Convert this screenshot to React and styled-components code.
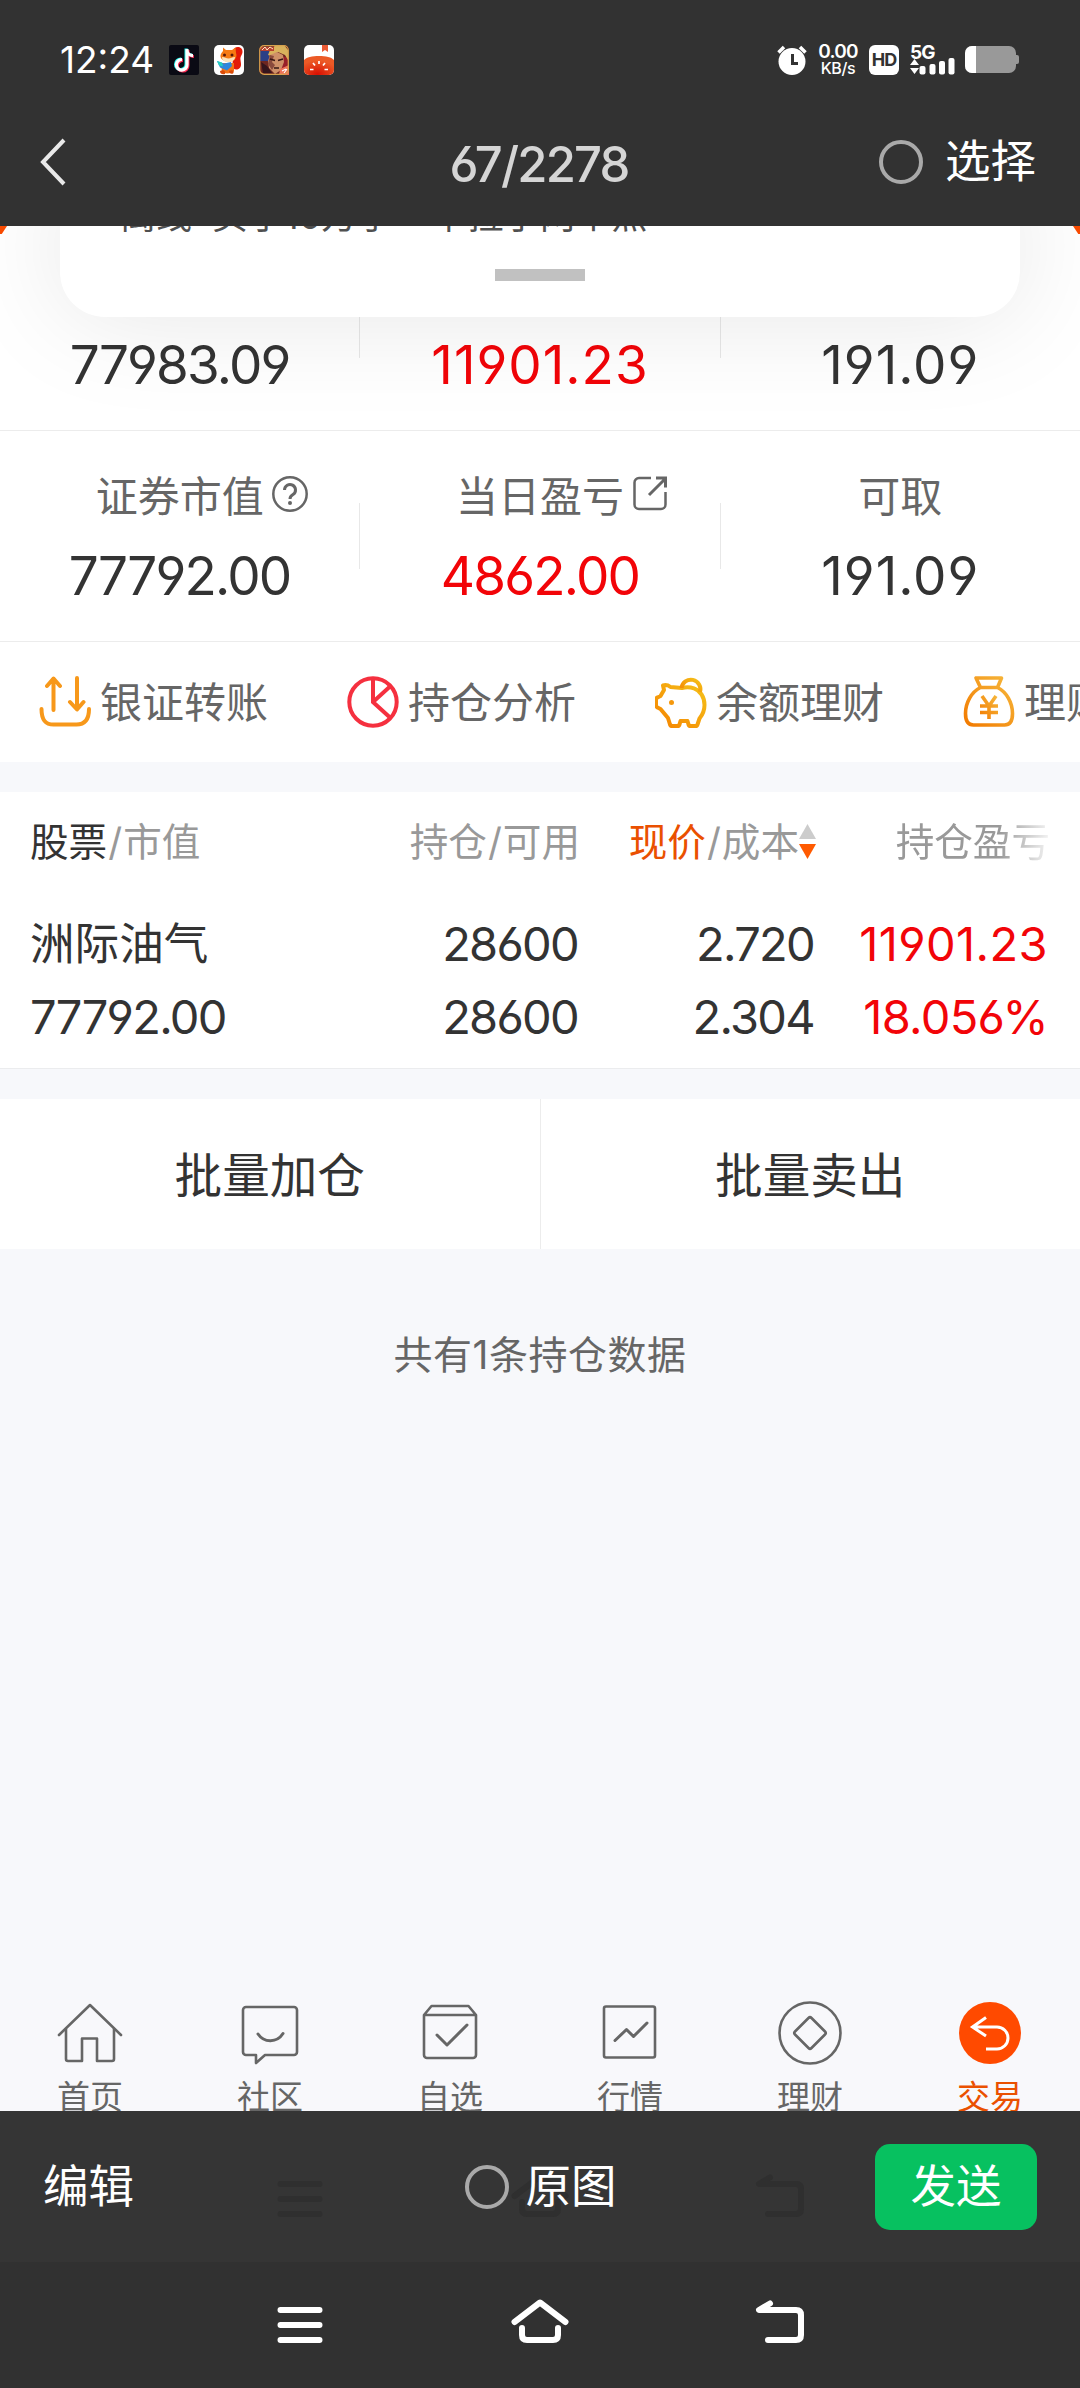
import styled, { createGlobalStyle } from "styled-components";

const summary = [
  [
    { value: "77983.09" },
    { value: "11901.23", up: true, tracking: 1 },
    { value: "191.09", tracking: 1 },
  ],
  [
    { label: "证券市值", value: "77792.00", icon: "help" },
    { label: "当日盈亏", value: "4862.00", up: true, icon: "open" },
    { label: "可取", value: "191.09", tracking: 1 },
  ],
];

const shortcuts = [
  { name: "银证转账", Icon: TransferIcon },
  { name: "持仓分析", Icon: PieIcon },
  { name: "余额理财", Icon: PiggyIcon },
  { name: "理财", Icon: MoneyBagIcon },
];

const tabs = [
  { name: "首页", Icon: HomeTabIcon },
  { name: "社区", Icon: ChatTabIcon },
  { name: "自选", Icon: BoxTabIcon },
  { name: "行情", Icon: TrendTabIcon },
  { name: "理财", Icon: CoinTabIcon },
  { name: "交易", Icon: TradeTabIcon, active: true },
];

export default function App() {
  return (
    <>
      <GlobalStyle />
      <Screen>
        <StatusBar />

        <ViewerHeader>
          <svg width="28" height="50" viewBox="0 0 28 50">
            <path
              d="M25 3 L4 25 L25 47"
              fill="none"
              stroke="#e9e9e9"
              strokeWidth="4"
            />
          </svg>
          <Counter>67/2278</Counter>
          <Choice>
            <Radio />
            选择
          </Choice>
        </ViewerHeader>

        <Photo>
          <Corner />
          <Corner $right />
          <Notice>
            <p>
              离线<NoticeGap />买了10万手<NoticeGap $small />一下拉了两个点
            </p>
            <Handle />
          </Notice>

          <Summary>
            {summary.map((cells, index) => (
              <SummaryRow key={index}>
                {cells.map((cell, cellIndex) => (
                  <SummaryCell key={cellIndex}>
                    <SummaryLabel>
                      {cell.label}
                      {cell.icon === "help" && <HelpIcon />}
                      {cell.icon === "open" && <OpenIcon />}
                    </SummaryLabel>
                    <SummaryValue $up={cell.up} $tracking={cell.tracking}>
                      {cell.value}
                    </SummaryValue>
                  </SummaryCell>
                ))}
              </SummaryRow>
            ))}
          </Summary>

          <Shortcuts>
            {shortcuts.map(({ name, Icon }) => (
              <Shortcut key={name}>
                <Icon />
                {name}
              </Shortcut>
            ))}
          </Shortcuts>

          <Holdings>
            <HoldingsHead>
              <HeadCell>
                <Dark>股票</Dark>
                <Slash>/</Slash>市值
              </HeadCell>
              <HeadCell $end>
                持仓<Slash>/</Slash>可用
              </HeadCell>
              <HeadCell $end>
                <Accent>现价</Accent>
                <Slash>/</Slash>成本
                <SortIcon />
              </HeadCell>
              <HeadCell $end $fade>
                持仓盈亏
              </HeadCell>
            </HoldingsHead>
            <HoldingsRow>
              <Name>洲际油气</Name>
              <Num>28600</Num>
              <Num>2.720</Num>
              <Num $up $tracking={0.4}>
                11901.23
              </Num>
              <Num $start>77792.00</Num>
              <Num>28600</Num>
              <Num>2.304</Num>
              <Num $up $tracking={-0.7}>
                18.056%
              </Num>
            </HoldingsRow>
          </Holdings>

          <Batch>
            <BatchButton>批量加仓</BatchButton>
            <BatchButton>批量卖出</BatchButton>
          </Batch>

          <Total>共有1条持仓数据</Total>

          <TabBar>
            {tabs.map(({ name, Icon, active }) => (
              <Tab key={name} $active={active}>
                <Icon />
                <span>{name}</span>
              </Tab>
            ))}
          </TabBar>
        </Photo>

        <Toolbar>
          <Ghost>
            <NavIcons color="#2f2f2f" />
          </Ghost>
          <Edit>编辑</Edit>
          <Original>
            <Radio />
            原图
          </Original>
          <Send>发送</Send>
        </Toolbar>

        <NavBar>
          <NavIcons color="#fff" />
        </NavBar>
      </Screen>
    </>
  );
}

// *** [ status bar ] ********************************************************

function StatusBar() {
  return (
    <Status>
      <Clock>12:24</Clock>
      <AppIcons>
        <svg viewBox="0 0 30 30">
          <rect width="30" height="30" rx="2" fill="#0a0a14" />
          <g fill="none" strokeWidth="3.2">
            <path
              d="M18 4v15.5a5.3 5.3 0 1 1-5-5M18 5c0 3 2.5 5.6 6 5.6"
              stroke="#25f4ee"
              transform="translate(-.9 -.5)"
            />
            <path
              d="M18 4v15.5a5.3 5.3 0 1 1-5-5M18 5c0 3 2.5 5.6 6 5.6"
              stroke="#fe2c55"
              transform="translate(.9 .9)"
            />
            <path
              d="M18 4v15.5a5.3 5.3 0 1 1-5-5M18 5c0 3 2.5 5.6 6 5.6"
              stroke="#fff"
            />
          </g>
        </svg>

        <svg viewBox="0 0 30 30">
          <rect width="30" height="30" rx="5" fill="#fff" />
          <path
            d="M19 6c1-6 10-5 9.500 1-.2 3-2.500 4-2 8s1.500 7-2 9c-3 1.500-6 0-6-3z"
            fill="#e31a08"
          />
          <path
            d="M9 2.500l3 2.500h6l3.500-2.500L22 8c1.500 4-1 8-6 8.500-5 .5-10-2-9.500-6C6.800 8 8.500 7 9 6z"
            fill="#f77a12"
          />
          <path d="M8 12c3 0 4 1.500 6.500 1.500S18 12 21 12c0 3.500-3 5-6.500 5S8 16 8 12z" fill="#fbe3bd" />
          <circle cx="10.500" cy="10" r="1.500" fill="#5a1a08" />
          <circle cx="18" cy="10" r="1.500" fill="#5a1a08" />
          <path d="M7 18h13v8c-2 3-10 3-12 1z" fill="#f47314" />
          <path d="M3 16l7 2.500 7-1.500 1 4-5 4.500-7-3z" fill="#2f86dc" />
          <path d="M3 16l5 1.500 1 4-4-1z" fill="#25cfc0" />
          <path d="M6 26c3-2 6 0 5 3-3 .6-5-.4-5-3zm9 0c3-2 6 0 4 2.500-2 .6-4 0-4-2.500z" fill="#d94a08" />
        </svg>

        <svg viewBox="0 0 30 30">
          <rect width="30" height="30" rx="5" fill="#6e2620" />
          <path d="M1 6h9v10H1z" fill="#2b3f86" />
          <path d="M23 12h7v13h-8z" fill="#98202a" />
          <path d="M11 5l6-5h8l4 5v10l-3-5-7-3-7 4-3-1z" fill="#d9b25c" />
          <path d="M11 10l7-3 6 3 1 7-3 8-6 4-6-6-1-7z" fill="#cf9068" />
          <path d="M11 10l4 1-2 6 3 3-3 5-4-6z" fill="#8a4a3c" />
          <path d="M11 14l5 1.500M19 15.500l5-1.500M15 23h5" stroke="#3a1714" strokeWidth="1.500" />
          <path d="M2 17l6 4 5 7H4z" fill="#35151c" />
          <path d="M21 24l9-4v10H20z" fill="#ee7258" />
          <path d="M23 26l4-2m-2 4l3-4" stroke="#fff" strokeWidth="1.200" />
          <path d="M2 2h13v4H2z" fill="#b8402e" />
          <path d="M3 5l3-3 2 3 3-3 3 2" stroke="#ffe6c0" fill="none" />
          <rect x=".7" y=".7" width="28.600" height="28.600" rx="4.500" fill="none" stroke="#d6a24e" strokeWidth="1.200" />
        </svg>

        <svg viewBox="0 0 30 30">
          <defs>
            <radialGradient id="tomato" cx=".45" cy=".95" r=".7">
              <stop offset="0" stopColor="#d80f02" />
              <stop offset="1" stopColor="#ec5a26" />
            </radialGradient>
            <clipPath id="tomatoClip">
              <rect width="30" height="30" rx="5" />
            </clipPath>
          </defs>
          <g clipPath="url(#tomatoClip)">
            <rect width="30" height="30" fill="#fff" />
            <path d="M18 0h6v7l-3-2-3 2z" fill="#ea5a34" />
            <path d="M0 15c4-5.500 26-5.500 30 0v15H0z" fill="url(#tomato)" />
            <path
              d="M15 16v3M9 18l2 2.500M21 18l-2 2.500M6 24.500h3.500M24 24.500h-3.500"
              stroke="#fff"
              strokeWidth="1.700"
            />
          </g>
        </svg>
      </AppIcons>

      <svg width="30" height="30" viewBox="0 0 30 30">
        <circle cx="15" cy="16.500" r="13.500" fill="#fff" />
        <path d="M1.500 7.500L7 2M28.500 7.500L23 2" stroke="#fff" strokeWidth="3.500" />
        <path d="M15.500 9v9.500h5.500" fill="none" stroke="#333" strokeWidth="3" />
      </svg>
      <Speed>
        <b>0.00</b>
        <span>KB/s</span>
      </Speed>
      <HdBadge>HD</HdBadge>
      <Signal>
        <b>5G</b>
        <svg width="46" height="17" viewBox="0 0 46 17">
          <path d="M0 7L4.500 1 9 7zM0 10h9l-4.500 6z" fill="#fff" />
          <rect x="9.500" y="8" width="6" height="8.500" rx="2" fill="#fff" />
          <rect x="19.500" y="6" width="6" height="10.500" rx="2" fill="#fff" />
          <rect x="29" y="3" width="6" height="13.500" rx="2" fill="#fff" />
          <rect x="38.500" y="0" width="6" height="16.500" rx="2" fill="#fff" />
        </svg>
      </Signal>
      <svg width="54" height="27" viewBox="0 0 54 27">
        <rect width="51" height="27" rx="7" fill="#999" />
        <rect x="49" y="9" width="5" height="9" rx="2" fill="#999" />
        <path d="M11 0H7a7 7 0 0 0-7 7v13a7 7 0 0 0 7 7h4z" fill="#fff" />
      </svg>
    </Status>
  );
}

// *** [ icons ] *************************************************************

function HelpIcon() {
  return (
    <svg width="36" height="36" viewBox="0 0 36 36" fill="none" stroke="#666">
      <circle cx="18" cy="18" r="16.700" strokeWidth="2.500" />
      <path
        d="M12.500 14a5.500 5.500 0 1 1 8.500 4.600c-2 1.300-3 2.200-3 4.400"
        strokeWidth="3"
      />
      <circle cx="18" cy="27" r="2" fill="#666" stroke="none" />
    </svg>
  );
}

function OpenIcon() {
  return (
    <svg width="36" height="36" viewBox="-1 0 36 36" fill="none" stroke="#666" strokeWidth="2.500">
      <path d="M18 2H6A4.500 4.500 0 0 0 1.500 6.500v22A4.500 4.500 0 0 0 6 33h22a4.500 4.500 0 0 0 4.500-4.500V16" />
      <path d="M16 19L32 3M23 2h9.500v9.500" strokeWidth="3" />
    </svg>
  );
}

function TransferIcon() {
  return (
    <svg viewBox="0 0 52 52" fill="none" stroke="#f7981a" strokeWidth="4" strokeLinecap="round" strokeLinejoin="round">
      <path d="M14.500 34V3M8 10l6.500-7.500L21 10M38 2v31M31 26l7 7.500 6.500-7.500" />
      <path d="M2.500 33c0 11 4 15.500 12 15.500h23c8 0 12.500-4.500 12.500-15.500" />
    </svg>
  );
}

function PieIcon() {
  return (
    <svg viewBox="0 0 52 52" fill="none" stroke="#f5303f" strokeWidth="4">
      <circle cx="26" cy="26" r="23.700" />
      <path d="M26 3v23l17 15.500M26 26l17-15.500" />
    </svg>
  );
}

function PiggyIcon() {
  return (
    <svg viewBox="0 0 52 52" fill="none" stroke="url(#piggy)" strokeWidth="4" strokeLinejoin="round">
      <defs>
        <linearGradient id="piggy" x1="0" y1="1" x2="1" y2="0">
          <stop offset="0" stopColor="#f58300" />
          <stop offset="1" stopColor="#f5c21a" />
        </linearGradient>
      </defs>
      <path d="M27 12c4-1 9-.6 12 .4 6.500 2.200 10.500 9 10.500 16.600 0 6-2.500 10.500-5 13.500l-2 6q-.5 1.500-2 1.500h-5q-1.500 0-2-1.500l-1-3.500h-7l-1 3.500q-.5 1.500-2 1.500h-5q-2 0-2.500-1.500l-2-6.500-7.500-9-3-1.500q-1.500-1-1.500-2v-6q0-1.500 1.500-2l3-1.500 3.500-6-1-4.500c3-1 5.500 0 7.500 1.500z" />
      <path d="M26.500 12a9.500 9.500 0 1 1 18.500 4" />
      <circle cx="16.500" cy="26.500" r="2.500" fill="#f5980c" stroke="none" />
    </svg>
  );
}

function MoneyBagIcon() {
  return (
    <svg viewBox="0 0 52 52" fill="none" stroke="url(#bag)" strokeWidth="3.600" strokeLinejoin="round">
      <defs>
        <linearGradient id="bag" x1="0" y1="1" x2="1" y2="0">
          <stop offset="0" stopColor="#f27a00" />
          <stop offset="1" stopColor="#f6b83c" />
        </linearGradient>
      </defs>
      <path d="M13 2h25.500l-4 9.500c9 4.500 15 15 15 26 0 8-2.500 11.500-8 11.500h-31c-5.500 0-8-3.500-8-11.500 0-11 6-21.500 15-26zM17.500 11.500h17" />
      <path d="M19 20l7 10 7-10M26 30v13M17 30h18M17 36.500h18" />
    </svg>
  );
}

function SortIcon() {
  return (
    <svg width="17" height="36" viewBox="0 0 17 36">
      <path d="M8.500 0L17 15H0z" fill="#ccc" />
      <path d="M0 20h17L8.500 35z" fill="#ff5a00" />
    </svg>
  );
}

function TabSvg({ children }) {
  return (
    <svg
      width="66"
      height="66"
      viewBox="0 0 66 66"
      fill="none"
      stroke="#666"
      strokeWidth="2.600"
      strokeLinecap="round"
      strokeLinejoin="round"
    >
      {children}
    </svg>
  );
}

function HomeTabIcon() {
  return (
    <TabSvg>
      <path d="M2 34L33 4l31 30" />
      <path d="M9 28v30a2 2 0 0 0 2 2h14V37.500h15V60h15a2 2 0 0 0 2-2V28" />
    </TabSvg>
  );
}

function ChatTabIcon() {
  return (
    <TabSvg>
      <path d="M9 6h48a3 3 0 0 1 3 3v42a3 3 0 0 1-3 3H28l-9 8v-8H9a3 3 0 0 1-3-3V9a3 3 0 0 1 3-3z" />
      <path d="M21 33c6 9 19 9 25-.5" strokeWidth="3" />
    </TabSvg>
  );
}

function BoxTabIcon() {
  return (
    <TabSvg>
      <path d="M7 14v40a3 3 0 0 0 3 3h46a3 3 0 0 0 3-3V14l-7.500-9h-37zM7 14h52" />
      <path d="M20 34l10 10 20-20" strokeWidth="3" />
    </TabSvg>
  );
}

function TrendTabIcon() {
  return (
    <TabSvg>
      <rect x="7" y="5.500" width="51" height="51" rx="2" />
      <path d="M18 39.500l11.500-11 7 7L50 22" strokeWidth="3" />
    </TabSvg>
  );
}

function CoinTabIcon() {
  return (
    <TabSvg>
      <circle cx="33" cy="32" r="30.500" />
      <path d="M31.500 17q1.500-1.500 3 0L48 30.500q1.500 1.500 0 3L34.500 47q-1.500 1.500-3 0L18 33.500q-1.500-1.500 0-3z" />
    </TabSvg>
  );
}

function TradeTabIcon() {
  return (
    <TabSvg>
      <circle cx="33" cy="32" r="31" fill="#ff4a00" stroke="none" />
      <path
        d="M29 16.500L15.500 26 29 35M16 26h24a10.500 10.500 0 0 1 0 22H29"
        stroke="#fff"
        strokeWidth="3"
        strokeLinecap="butt"
        strokeLinejoin="miter"
      />
    </TabSvg>
  );
}

function NavIcons({ color }) {
  const paths = [
    "M10.500 15h39M10.500 30h39M10.500 45h39",
    "M4.500 27L30 7.500L55.500 27M12 33v7q0 5 5 5h26q5 0 5-5v-7",
    "M20 8.500L9 15h37q5 0 5 5v20q0 5-5 5H18",
  ];

  return paths.map((path) => (
    <svg
      key={path}
      width="60"
      height="60"
      viewBox="0 0 60 60"
      fill="none"
      stroke={color}
      strokeWidth="6"
      strokeLinecap="round"
      strokeLinejoin="round"
    >
      <path d={path} />
    </svg>
  ));
}

// *** [ styles ] ************************************************************

const GlobalStyle = createGlobalStyle`
  * {
    box-sizing: border-box;
    margin: 0;
    padding: 0;
  }

  body {
    background: #313131;
    font-family: Inter, "Noto Sans CJK SC", sans-serif;
    /* open 6 and 9 */
    font-feature-settings: "cv03", "cv04";
  }

  svg {
    display: block;
    flex: none;
  }

  button {
    border: none;
    background: none;
    font: inherit;
    color: inherit;
  }
`;

const Screen = styled.div`
  width: 1080px;
  height: 2388px;
  display: flex;
  flex-direction: column;
  overflow: hidden;
`;

const Status = styled.div`
  height: 104px;
  padding: 15px 61px 0 60px;
  background: #323232;
  color: #fff;
  display: flex;
  align-items: center;
`;

const Clock = styled.span`
  width: 109px;
  font-size: 37px;
  line-height: 40px;
`;

const AppIcons = styled.div`
  display: flex;
  gap: 15px;
  margin-right: auto;

  svg {
    width: 30px;
    height: 30px;
  }
`;

const Speed = styled.div`
  width: 38px;
  margin: 0 12px;
  display: flex;
  flex-direction: column;
  align-items: center;
  line-height: 16px;
  white-space: nowrap;

  b {
    font-size: 19px;
    font-weight: 600;
    letter-spacing: -0.8px;
  }

  span {
    font-size: 16px;
    font-weight: 500;
    letter-spacing: -0.4px;
  }
`;

const HdBadge = styled.span`
  width: 30px;
  height: 30px;
  border-radius: 6px;
  background: #fff;
  color: #323232;
  font-size: 18px;
  font-weight: 700;
  letter-spacing: -1px;
  line-height: 30px;
  text-align: center;
`;

const Signal = styled.div`
  width: 46px;
  margin: 0 9px 0 11px;
  height: 30px;

  b {
    display: block;
    height: 13px;
    font-size: 19px;
    font-weight: 700;
    letter-spacing: -1px;
    line-height: 15px;
  }
`;

const ViewerHeader = styled.header`
  height: 122px;
  padding: 0 44px 6px 39px;
  background: #323232;
  display: grid;
  grid-template-columns: 1fr auto 1fr;
  align-items: center;
`;

const Counter = styled.h1`
  font-size: 49px;
  font-weight: 500;
  letter-spacing: -1.8px;
  line-height: 60px;
  padding: 6px 0 0 3px;
  color: #d5d5d5;
`;

const Choice = styled.button`
  justify-self: end;
  display: flex;
  align-items: center;
  gap: 22px;
  color: #fff;
  font-size: 45.5px;
  line-height: 56px;
`;

const Radio = styled.i`
  width: 44px;
  height: 44px;
  border: 4px solid #a9a9a9;
  border-radius: 50%;
`;

const Photo = styled.main`
  position: relative; // holds the notice that hangs over the page
  height: 1885px;
  background: #f7f8fb;
  overflow: hidden;
  display: flex;
  flex-direction: column;
`;

const Corner = styled.i`
  position: absolute;
  z-index: 1;
  top: 0;
  ${(props) => (props.$right ? "right: 0;" : "left: 0;")}
  width: 7px;
  height: 8px;
  background: #f84a00;
  clip-path: polygon(0 0, 100% 0, 25% 100%, 0 100%);
  transform: ${(props) => (props.$right ? "scaleX(-1)" : "none")};
`;

const Notice = styled.div`
  position: absolute;
  top: -40px;
  left: 60px;
  right: 60px;
  height: 131px;
  border-radius: 0 0 45px 45px;
  background: #fff;
  box-shadow: 0 0 110px rgba(0, 0, 0, 0.1);
  color: #505050;

  p {
    padding: 10px 0 0 60px;
    font-size: 36px;
    line-height: 40px;
    white-space: nowrap;
  }
`;

const NoticeGap = styled.span`
  display: inline-block;
  width: ${(props) => (props.$small ? "2px" : "20px")};
`;

const Handle = styled.i`
  display: block;
  width: 90px;
  height: 12px;
  margin: 33px auto 0;
  background: #c1c1c1;
`;

const Summary = styled.section`
  margin-top: -6px;
  flex: none;
  background: #fff;
`;

const SummaryRow = styled.div`
  height: 211px;
  border-bottom: 1px solid #ececec;
  display: flex;
  align-items: center;
`;

const SummaryCell = styled.div`
  flex: 1;
  height: 66px;
  display: flex;
  flex-direction: column;
  align-items: center;
  justify-content: center;
  gap: 17px;
  border-right: 1px solid #e8e8e8;

  &:last-child {
    border-right: none;
  }
`;

const SummaryLabel = styled.div`
  position: relative;
  flex: none;
  height: 60px;
  margin-top: 3px;
  font-size: 42px;
  line-height: 60px;
  color: #666;

  // label stays centred without its icon
  svg {
    position: absolute;
    top: 9px;
    left: calc(100% + 8px);
  }
`;

const SummaryValue = styled.div`
  flex: none;
  font-size: 53px;
  letter-spacing: ${(props) => props.$tracking ?? -1.8}px;
  line-height: 64px;
  color: ${(props) => (props.$up ? "#f20408" : "#333")};
`;

const Shortcuts = styled.nav`
  height: 120px;
  flex: none;
  padding: 2px 0 0 39px;
  display: flex;
  align-items: center;
  overflow: hidden;
  background: #fff;
`;

const Shortcut = styled.button`
  flex: none;
  width: 308px;
  display: flex;
  align-items: center;
  gap: 9px;
  color: #666;
  font-size: 42px;
  line-height: 60px;
  white-space: nowrap;

  svg {
    width: 52px;
    height: 52px;
    margin-top: -2px;
  }
`;

const Holdings = styled.section`
  margin-top: 30px;
  height: 277px;
  flex: none;
  padding: 20px 30px 0;
  background: #fff;
  border-bottom: 1px solid #ebecee;
`;

const HoldingsHead = styled.div`
  display: grid;
  grid-template-columns: 270px 280px 236px 234px;
  height: 60px;
  color: #999;
  font-size: 38.6px;
  line-height: 60px;
`;

const HeadCell = styled.div`
  display: flex;
  align-items: center;
  justify-content: ${(props) => (props.$end ? "flex-end" : "flex-start")};
  white-space: nowrap;
  mask-image: ${(props) =>
    props.$fade
      ? "linear-gradient(to right, #000 78%, rgba(0, 0, 0, 0.1))"
      : "none"};
`;

const Dark = styled.span`
  color: #333;
`;

const Accent = styled.span`
  color: #ea5000;
`;

const Slash = styled.span`
  width: 16px;
  text-align: center;
`;

const HoldingsRow = styled.div`
  display: grid;
  grid-template-columns: 270px 280px 236px 234px;
  grid-auto-rows: 73px;
  align-items: center;
  margin-top: 35px;
`;

const Name = styled.div`
  font-size: 44.6px;
  line-height: 60px;
  color: #333;
`;

const Num = styled.div`
  padding-right: ${(props) => (props.$start ? 0 : 2)}px;
  font-size: 47px;
  letter-spacing: ${(props) => props.$tracking ?? -1.7}px;
  line-height: 60px;
  text-align: ${(props) => (props.$start ? "left" : "right")};
  color: ${(props) => (props.$up ? "#f20408" : "#333")};
`;

const Batch = styled.section`
  flex: none;
  display: flex;
  height: 150px;
  margin-top: 30px;
  background: #fff;
`;

const BatchButton = styled.button`
  flex: 1;
  padding-bottom: 4px;
  font-size: 47.6px;
  color: #333;

  & + & {
    border-left: 1px solid #ececec;
  }
`;

const Total = styled.p`
  margin-top: 76px;
  text-align: center;
  font-size: 39px;
  letter-spacing: 0.5px;
  line-height: 60px;
  color: #666;
`;

const TabBar = styled.nav`
  margin-top: auto;
  flex: none;
  height: 111px;
  background: #f8f8fb;
  display: flex;
`;

const Tab = styled.div`
  flex: 1;
  display: flex;
  flex-direction: column;
  align-items: center;
  padding-top: 1px;
  color: ${(props) => (props.$active ? "#ea5000" : "#666")};
  font-size: 33px;
  line-height: 40px;

  span {
    margin-top: 10px;
  }
`;

const Toolbar = styled.footer`
  position: relative;
  height: 151px;
  padding: 0 43px;
  background: #353535;
  display: grid;
  grid-template-columns: 1fr auto 1fr;
  align-items: center;
  color: #fff;
  font-size: 45.5px;
  line-height: 56px;
`;

const Edit = styled.button`
  position: relative;
  justify-self: start;
`;

const Original = styled.button`
  position: relative;
  display: flex;
  align-items: center;
  gap: 16px;
  padding-left: 2px;
`;

const Send = styled.button`
  position: relative;
  justify-self: end;
  width: 162px;
  height: 86px;
  border-radius: 15px;
  background: #07c160;
`;

// previous navigation keys showing through the toolbar
const Ghost = styled.div`
  position: absolute;
  top: 58px;
  left: 270px;
  right: 270px;
  display: flex;
  justify-content: space-between;
`;

const NavBar = styled.nav`
  height: 126px;
  padding: 0 270px;
  background: #313131;
  display: flex;
  align-items: center;
  justify-content: space-between;
`;
